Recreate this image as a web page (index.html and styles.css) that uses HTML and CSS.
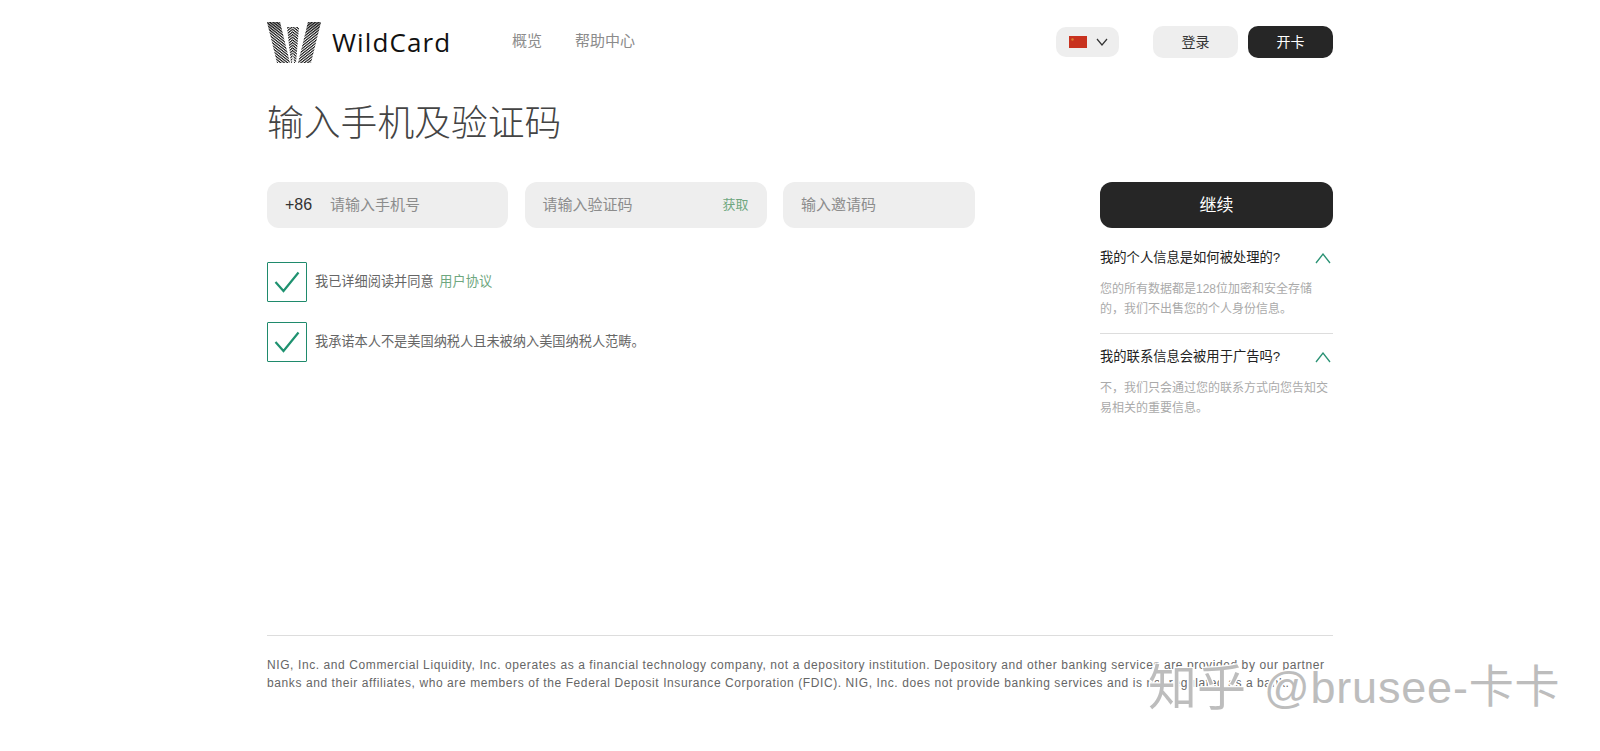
FILE: index.html
```html
<!DOCTYPE html>
<html lang="zh">
<head>
<meta charset="utf-8">
<title>WildCard</title>
<link rel="stylesheet" href="styles.css">
</head>
<body>
<div class="page">
  <header class="header">
    <a class="logo">
      <svg class="logo-mark" width="54" height="41" viewBox="0 0 54 41">
        <defs>
          <pattern id="sl" width="2.100" height="2.100" patternUnits="userSpaceOnUse" patternTransform="rotate(38)">
            <rect width="2.100" height="1.100" fill="#111"/>
          </pattern>
          <pattern id="sr" width="2.100" height="2.100" patternUnits="userSpaceOnUse" patternTransform="rotate(-38)">
            <rect width="2.100" height="1.100" fill="#111"/>
          </pattern>
          <linearGradient id="shade" x1="0" y1="0" x2="0" y2="1">
            <stop offset="0" stop-color="#111" stop-opacity="0.450"/>
            <stop offset="0.350" stop-color="#111" stop-opacity="0"/>
          </linearGradient>
        </defs>
        <polygon points="0,0 13,0 23,41 10,41" fill="url(#sl)"/>
        <polygon points="20,5 26,5 26,30 25,41 24,41" fill="url(#sr)"/>
        <polygon points="26,5 32,5 29,41 27,41 26,30" fill="url(#sl)"/>
        <polygon points="41,0 54,0 44,41 31,41" fill="url(#sr)"/>
        <polygon points="0,0 13,0 23,41 10,41" fill="url(#shade)"/>
        <polygon points="41,0 54,0 44,41 31,41" fill="url(#shade)"/>
      </svg>
      <span class="logo-text">WildCard</span>
    </a>
    <nav class="nav">
      <a>概览</a>
      <a>帮助中心</a>
    </nav>
    <div class="header-right">
      <div class="lang">
        <svg class="flag" width="18" height="12" viewBox="0 0 18 12"><rect width="18" height="12" fill="#c8321f"/><circle cx="3.500" cy="3.500" r="1.200" fill="#d9822c"/></svg>
        <svg width="12" height="8" viewBox="0 0 12 8"><path d="M1 1l5 6 5-6" fill="none" stroke="#333" stroke-width="1.200"/></svg>
      </div>
      <div class="auth">
        <a class="btn btn-light">登录</a>
        <a class="btn btn-dark">开卡</a>
      </div>
    </div>
  </header>

  <main class="main">
    <h1 class="title">输入手机及验证码</h1>
    <div class="content">
      <div class="form">
        <div class="fields">
          <div class="field field-phone"><span class="prefix">+86</span><span class="hint">请输入手机号</span></div>
          <div class="field field-code"><span class="hint">请输入验证码</span><a class="fetch">获取</a></div>
          <div class="field field-invite"><span class="hint">输入邀请码</span></div>
        </div>
        <label class="check">
          <span class="box"><svg width="26" height="24" viewBox="0 0 26 24"><path d="M1.500 12l8 9L24.500 2.500" fill="none" stroke="#1f9270" stroke-width="2.200"/></svg></span>
          <span class="check-text">我已详细阅读并同意 <a class="link">用户协议</a></span>
        </label>
        <label class="check">
          <span class="box"><svg width="26" height="24" viewBox="0 0 26 24"><path d="M1.500 12l8 9L24.500 2.500" fill="none" stroke="#1f9270" stroke-width="2.200"/></svg></span>
          <span class="check-text">我承诺本人不是美国纳税人且未被纳入美国纳税人范畴。</span>
        </label>
      </div>
      <aside class="side">
        <a class="continue">继续</a>
        <section class="faq">
          <div class="faq-q"><span>我的个人信息是如何被处理的?</span><svg width="16" height="11" viewBox="0 0 16 11"><path d="M1 10l7-9 7 9" fill="none" stroke="#2a9274" stroke-width="1.300"/></svg></div>
          <p class="faq-a">您的所有数据都是128位加密和安全存储的，我们不出售您的个人身份信息。</p>
        </section>
        <section class="faq faq-last">
          <div class="faq-q"><span>我的联系信息会被用于广告吗?</span><svg width="16" height="11" viewBox="0 0 16 11"><path d="M1 10l7-9 7 9" fill="none" stroke="#2a9274" stroke-width="1.300"/></svg></div>
          <p class="faq-a">不，我们只会通过您的联系方式向您告知交易相关的重要信息。</p>
        </section>
      </aside>
    </div>
  </main>

  <footer class="footer">
    <p>NIG, Inc. and Commercial Liquidity, Inc. operates as a financial technology company, not a depository institution. Depository and other banking services are provided by our partner banks and their affiliates, who are members of the Federal Deposit Insurance Corporation (FDIC). NIG, Inc. does not provide banking services and is not regulated as a bank.</p>
  </footer>
</div>
<div class="watermark"><span class="wm-zh">知乎</span><span class="wm-en">@brusee-卡卡</span></div>
</body>
</html>
```
FILE: styles.css
```css
* { box-sizing: border-box; }
html, body { margin: 0; padding: 0; height: 100%; }
body {
  background: #fff;
  color: #222;
  font-family: "Liberation Sans", "Noto Sans CJK SC", sans-serif;
  overflow: hidden;
}
.page { width: 1066px; margin: 0 auto; }
.header { display: flex; align-items: center; height: 84px; }
.logo { display: flex; align-items: center; gap: 11px; width: 245px; }
.logo-text {
  font-family: "Open Sans", sans-serif;
  font-size: 26px;
  letter-spacing: 1.100px;
  color: #111;
  line-height: 1;
}
.nav { display: flex; gap: 33px; padding-bottom: 5px; font-size: 15px; color: #8b8b8b; }
.header-right { margin-left: auto; display: flex; align-items: center; gap: 34px; }
.lang {
  display: flex; align-items: center; justify-content: center; gap: 9px;
  width: 63px; height: 30px; padding-left: 2px; border-radius: 10px; background: #eee;
}
.auth { display: flex; gap: 10px; }
.btn {
  display: flex; align-items: center; justify-content: center;
  width: 85px; height: 32px; padding-bottom: 3px; border-radius: 10px; font-size: 14px;
}
.btn-light { background: #eee; color: #333; }
.btn-dark { background: #262626; color: #fff; }
.title {
  margin: 16px 0 0;
  font-size: 36.800px;
  font-weight: 300;
  line-height: 48px;
  color: #444;
}
.content { display: flex; justify-content: space-between; margin-top: 34px; }
.form { width: 708px; }
.fields { display: flex; justify-content: space-between; margin-bottom: 34px; }
.field {
  display: flex; align-items: center;
  height: 46px; padding: 0 18px 4px; border-radius: 12px; background: #eee;
  font-size: 15px;
}
.field-phone { width: 241px; }
.field-code { width: 242px; justify-content: space-between; }
.field-invite { width: 192px; }
.prefix { margin-top: 4px; font-size: 16px; color: #333; width: 45px; }
.hint { color: #8c8c8c; }
.fetch { color: #6fa77f; font-size: 13px; }
.check {
  display: flex; align-items: center; gap: 8px;
  margin-bottom: 20px; font-size: 13.200px; color: #666;
}
.check-text { padding-bottom: 4px; }
.box {
  display: flex; align-items: center; justify-content: center;
  width: 40px; height: 40px; border: 1px solid #1f8a6c; border-radius: 1px;
}
.link { margin-left: 2px; color: #6fa77f; }
.side { width: 233px; }
.continue {
  display: flex; align-items: center; justify-content: center;
  height: 46px; padding-bottom: 4px; border-radius: 12px; background: #262626; color: #fff; font-size: 17px;
}
.faq { padding: 21px 0 14px; border-bottom: 1px solid #ddd; }
.faq + .faq { padding-top: 14px; }
.faq-last { border-bottom: 0; }
.faq-q {
  display: flex; align-items: center; justify-content: space-between;
  padding-right: 2px; font-size: 13.300px; line-height: 18px; color: #222;
}
.faq-a { margin: 12px 0 0; font-size: 12px; line-height: 20px; color: #aaa; }
.footer {
  margin-top: 203px;
  padding-top: 20px;
  border-top: 1px solid #ddd;
  font-size: 12px;
  line-height: 18px;
  letter-spacing: 0.590px;
  color: #666;
}
.footer p { margin: 0; }
.watermark {
  position: absolute;
  left: 1148px;
  top: 660px;
  display: flex;
  align-items: center;
  gap: 18px;
  line-height: 56px;
  white-space: nowrap;
  color: #bdbdbd;
  text-shadow: 0 0 2px #fff, 1px 1px 0 #fff, -1px -1px 0 #fff, 1px -1px 0 #fff, -1px 1px 0 #fff;
}
.wm-zh { font-size: 49px; }
.wm-en { font-size: 45px; letter-spacing: 0.800px; }
```
